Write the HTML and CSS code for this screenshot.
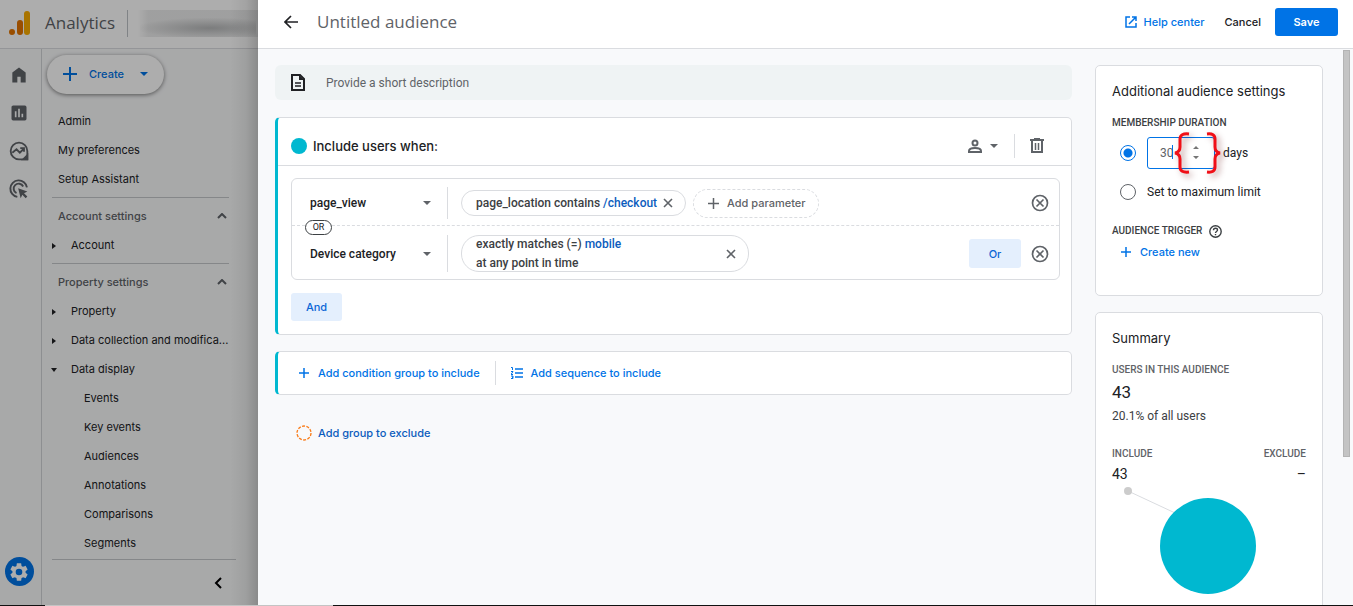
FILE: index.html
```html
<!DOCTYPE html>
<html lang="en">
<head>
  <meta charset="UTF-8" />
  <meta name="viewport" content="width=device-width, initial-scale=1.0" />
  <title>Analytics | Untitled audience</title>
  <link rel="stylesheet" href="styles.css">
</head>
<body>
  <div class="page">
    <div class="backdrop">
      <header class="app-header">
        <svg class="logo" width="22" height="26" viewBox="0 0 22 26">
          <rect x="15" y="1" width="6" height="24" rx="3" fill="#f9ab00"/>
          <rect x="8" y="10" width="6" height="15" rx="3" fill="#e37400"/>
          <circle cx="3" cy="22" r="3" fill="#e37400"/>
        </svg>
        <span class="app-name">Analytics</span>
        <span class="account"></span>
      </header>
      <div class="app-body">
        <nav class="rail">
          <a href="#" aria-label="Home"><svg width="20" height="20" viewBox="0 0 24 24"><path d="M4 21V9l8-6 8 6v12h-6v-7h-4v7z"/></svg></a>
          <a href="#" aria-label="Reports"><svg width="20" height="20" viewBox="0 0 24 24"><path fill-rule="evenodd" d="M5 3h14a2 2 0 0 1 2 2v14a2 2 0 0 1-2 2H5a2 2 0 0 1-2-2V5c0-1.100.9-2 2-2zm2 7v7h2v-7zm4-3v10h2V7zm4 6v4h2v-4z"/></svg></a>
          <a href="#" aria-label="Explore"><svg width="20" height="20" viewBox="0 0 24 24" fill="none" stroke="#5f6368" stroke-width="2.200"><path d="M22 22h-10a10 10 0 1 1 10-10z"/><path d="M4 14l5-4 4 4 5-5M13.500 8.500H18V13"/><path d="M17 22l5-5v5z" fill="#5f6368"/></svg></a>
          <a href="#" aria-label="Advertising"><svg width="20" height="20" viewBox="0 0 24 24" fill="none" stroke="#5f6368" stroke-width="2.300"><path d="M10 21.500A10 10 0 1 1 21.500 10"/><path d="M9 17a6 6 0 1 1 8-8"/><path d="M11 11l11 4-4 2 4 4-2 2-4-4-2 4z" fill="#5f6368" stroke="none"/></svg></a>
          <a href="#" class="rail-admin" aria-label="Admin"><svg width="22" height="22" viewBox="0 0 24 24"><path fill="#fff" d="M19.140 12.940c.040-.300.060-.610.060-.940 0-.320-.020-.640-.070-.940l2.030-1.580c.180-.140.230-.410.120-.610l-1.920-3.320c-.120-.220-.370-.290-.590-.220l-2.390.960c-.500-.380-1.030-.700-1.620-.940l-.360-2.540c-.040-.240-.240-.410-.480-.410h-3.840c-.240 0-.430.170-.470.410l-.360 2.540c-.590.240-1.130.570-1.620.940l-2.390-.960c-.220-.080-.470 0-.590.220L2.740 8.870c-.120.210-.080.470.120.610l2.030 1.580c-.050.300-.090.630-.090.940s.020.640.070.940l-2.030 1.580c-.180.140-.230.410-.120.610l1.920 3.320c.120.220.370.290.590.220l2.390-.960c.500.380 1.030.700 1.620.940l.360 2.540c.050.240.240.410.480.410h3.840c.240 0 .440-.170.470-.410l.360-2.540c.590-.240 1.130-.560 1.620-.940l2.390.960c.220.080.470 0 .590-.220l1.920-3.320c.120-.220.070-.470-.120-.610zM12 15.600A3.600 3.600 0 1 1 12 8.400a3.600 3.600 0 0 1 0 7.200z"/></svg></a>
        </nav>
        <nav class="side">
          <button class="create" type="button">
            <svg width="14" height="14" viewBox="0 0 14 14"><path d="M7 0v14M0 7h14" stroke="#0073e6" stroke-width="2"/></svg>
            <span>Create</span>
            <i class="caret"></i>
          </button>
          <ul class="menu">
            <li><a href="#">Admin</a></li>
            <li><a href="#">My preferences</a></li>
            <li><a href="#">Setup Assistant</a></li>
          </ul>
          <h2 class="menu-title">Account settings <svg width="10" height="6" viewBox="0 0 10 6"><path d="M1 5l4-4 4 4"/></svg></h2>
          <ul class="menu tree">
            <li class="closed"><a href="#">Account</a></li>
          </ul>
          <h2 class="menu-title">Property settings <svg width="10" height="6" viewBox="0 0 10 6"><path d="M1 5l4-4 4 4"/></svg></h2>
          <ul class="menu tree">
            <li class="closed"><a href="#">Property</a></li>
            <li class="closed"><a href="#">Data collection and modifica...</a></li>
            <li class="open"><a href="#">Data display</a></li>
          </ul>
          <ul class="menu sub">
            <li><a href="#">Events</a></li>
            <li><a href="#">Key events</a></li>
            <li><a href="#">Audiences</a></li>
            <li><a href="#">Annotations</a></li>
            <li><a href="#">Comparisons</a></li>
            <li><a href="#">Segments</a></li>
          </ul>
          <div class="side-foot">
            <button type="button" aria-label="Collapse menu"><svg width="8" height="12" viewBox="0 0 8 12"><path d="M7 1L2 6l5 5" fill="none" stroke="#000" stroke-width="2"/></svg></button>
          </div>
        </nav>
      </div>
    </div>

    <section class="panel">
      <header class="panel-header">
        <button class="icon-btn" type="button" aria-label="Back"><svg width="14" height="14" viewBox="0 0 14 14"><path d="M14 7H2M7 1L1 7l6 6" fill="none" stroke="#202124" stroke-width="1.700"/></svg></button>
        <h1>Untitled audience</h1>
        <a class="help" href="#"><svg width="12" height="12" viewBox="0 0 12 12"><path d="M5 1H1v10h10V7M7 1h4v4M11 1L4 8" fill="none" stroke="#0073e6" stroke-width="1.500"/></svg>Help center</a>
        <button class="cancel" type="button">Cancel</button>
        <button class="save" type="button">Save</button>
      </header>

      <div class="panel-body">
        <main class="builder">
          <label class="description">
            <svg width="14" height="17" viewBox="0 0 14 17"><path d="M1 1h8l4 4v11H1z" fill="none" stroke="#202124" stroke-width="2"/><path d="M8 1l5 5H8z" fill="#202124"/><path d="M4 9h6M4 12h6" stroke="#202124" stroke-width="1.500"/></svg>
            <input type="text" placeholder="Provide a short description">
          </label>

          <section class="card group">
            <header class="group-header">
              <i class="dot"></i>
              <h2>Include users when:</h2>
              <button class="icon-btn scope" type="button" aria-label="Condition scope">
                <svg width="14" height="14" viewBox="0 0 14 14" fill="none" stroke="#5f6368" stroke-width="2"><circle cx="7" cy="4" r="2.500"/><path d="M1 13v-1c0-2 3-3 6-3s6 1 6 3v1z"/></svg>
                <i class="caret"></i>
              </button>
              <span class="rule"></span>
              <button class="icon-btn trash" type="button" aria-label="Delete group"><svg width="14" height="16" viewBox="0 0 14 16" fill="none" stroke="#5f6368" stroke-width="2"><path d="M0 2h14M4 1h6M2 2v12h10V2"/><path d="M5.500 5v7M8.500 5v7" stroke-width="1.500"/></svg></button>
            </header>

            <div class="conditions">
              <div class="condition">
                <button class="picker" type="button">page_view <i class="caret"></i></button>
                <div class="chip">
                  <span>page_location contains <b>/checkout</b></span>
                  <button class="icon-btn" type="button" aria-label="Remove parameter"><svg width="10" height="10" viewBox="0 0 10 10"><path d="M1 1l8 8M9 1L1 9" stroke="#5f6368" stroke-width="1.600"/></svg></button>
                </div>
                <button class="add-param" type="button"><svg width="11" height="11" viewBox="0 0 11 11"><path d="M5.500 0v11M0 5.500h11" stroke="#5f6368" stroke-width="1.500"/></svg>Add parameter</button>
                <button class="icon-btn remove" type="button" aria-label="Remove condition"><svg width="18" height="18" viewBox="0 0 18 18"><path d="M5.500 5.500l7 7M12.500 5.500l-7 7" stroke="#5f6368" stroke-width="1.700"/><circle cx="9" cy="9" r="7.500" fill="none" stroke="#5f6368" stroke-width="1.700"/></svg></button>
              </div>
              <span class="or-badge">OR</span>
              <div class="condition second">
                <button class="picker" type="button">Device category <i class="caret"></i></button>
                <div class="chip wide">
                  <span>exactly matches (=) <b>mobile</b><br>at any point in time</span>
                  <button class="icon-btn" type="button" aria-label="Remove filter"><svg width="10" height="10" viewBox="0 0 10 10"><path d="M1 1l8 8M9 1L1 9" stroke="#5f6368" stroke-width="1.600"/></svg></button>
                </div>
                <button class="soft or-btn" type="button">Or</button>
                <button class="icon-btn remove" type="button" aria-label="Remove condition"><svg width="18" height="18" viewBox="0 0 18 18"><path d="M5.500 5.500l7 7M12.500 5.500l-7 7" stroke="#5f6368" stroke-width="1.700"/><circle cx="9" cy="9" r="7.500" fill="none" stroke="#5f6368" stroke-width="1.700"/></svg></button>
              </div>
            </div>
            <button class="soft and-btn" type="button">And</button>
          </section>

          <section class="card add-row">
            <button class="link-btn" type="button"><svg width="12" height="12" viewBox="0 0 12 12"><path d="M6 1v10M1 6h10" stroke="#0073e6" stroke-width="1.500"/></svg>Add condition group to include</button>
            <span class="rule"></span>
            <button class="link-btn" type="button"><svg width="12" height="12" viewBox="0 0 12 12" fill="none" stroke="#0073e6"><path d="M4 2h8M4 6h8M4 10h8" stroke-width="1.400"/><path d="M0 .500h1.500V3M0 4.500h2L0 7.500h2M0 9h2v1.200H1h1v1.300H0"/></svg>Add sequence to include</button>
          </section>

          <button class="link-btn exclude" type="button"><svg width="16" height="16" viewBox="0 0 16 16"><circle cx="8" cy="8" r="7" fill="none" stroke="#fa7b17" stroke-width="1.300" stroke-dasharray="3 1.400"/></svg>Add group to exclude</button>
        </main>

        <aside class="settings">
          <section class="card box duration">
            <h2>Additional audience settings</h2>
            <h3>Membership duration</h3>
            <div class="option">
              <input type="radio" name="duration" id="days" checked>
              <span class="days-field">
                <input type="text" inputmode="numeric" value="30" aria-label="Number of days">
                <i class="cursor"></i>
                <svg class="spin" width="6" height="15" viewBox="0 0 6 15"><path d="M0 4l3-3 3 3zM0 11l3 3 3-3z" fill="#757575"/></svg>
                <svg class="braces" width="50" height="44" viewBox="0 0 50 44" fill="none" stroke="#f00f17" stroke-width="3"><path d="M16 3q-9-1-9 5v8q0 5-5 6 5 1 5 6v8q0 6 9 5"/><path d="M34 3q8-1 8 5v8q0 5 5 6-5 1-5 6v8q0 6-8 5"/></svg>
              </span>
              <label for="days">days</label>
            </div>
            <div class="option max">
              <input type="radio" name="duration" id="max">
              <label for="max">Set to maximum limit</label>
            </div>
            <h3 class="trigger">Audience trigger <svg width="13" height="13" viewBox="0 0 13 13" fill="none" stroke="#3c4043" stroke-width="1.400"><circle cx="6.500" cy="6.500" r="5.700"/><path d="M4.500 5.200c0-2.700 4-2.500 4-.200C8.500 6.500 6.500 6.500 6.500 8M6.500 9v1.300"/></svg></h3>
            <button class="link-btn create-new" type="button"><svg width="12" height="12" viewBox="0 0 12 12"><path d="M6 1v10M1 6h10" stroke="#0073e6" stroke-width="1.500"/></svg>Create new</button>
          </section>

          <section class="card box summary">
            <h2>Summary</h2>
            <h3>Users in this audience</h3>
            <p class="total">43</p>
            <p class="share">20.1% of all users</p>
            <div class="split">
              <div><h3>Include</h3><p>43</p></div>
              <div><h3>Exclude</h3><p>–</p></div>
            </div>
            <svg class="chart" viewBox="0 0 194 120"><path d="M16 8l60 28" stroke="#dadce0"/><circle cx="16" cy="8" r="4" fill="#ccc"/><circle cx="96" cy="63" r="48" fill="#00b8d0"/></svg>
          </section>
        </aside>
        <div class="scrollbar"><i></i></div>
      </div>
    </section>
  </div>
  <div class="edge"></div>
</body>
</html>
```

FILE: styles.css
```css
* {
  box-sizing: border-box;
}
body {
  margin: 0;
  height: 100vh;
  display: flex;
  flex-direction: column;
  overflow: hidden;
  font-family: Roboto, sans-serif;
  font-size: 12px;
  color: #202124;
  background: #fff;
}
h1, h2, h3, p, ul {
  margin: 0;
  padding: 0;
  font-weight: 400;
}
ul {
  list-style: none;
}
a {
  color: inherit;
  text-decoration: none;
}
button {
  padding: 0;
  border: 0;
  background: none;
  font: 500 11px Inter, sans-serif;
  color: inherit;
  cursor: pointer;
}
svg {
  flex: none;
  display: block;
}
.page {
  flex: 1;
  display: flex;
  min-height: 0;
}
.edge {
  height: 1px;
  background: linear-gradient(90deg, #111 45px, #c4c4c4 45px, #c4c4c4 333px, #111 333px);
}
.caret {
  flex: none;
  border: 4px solid transparent;
  border-top-color: #5f6368;
  border-bottom: 0;
}
.icon-btn {
  display: flex;
  align-items: center;
}
.rule {
  width: 1px;
  height: 24px;
  background: #dadce0;
}

/* app behind the panel */
.backdrop {
  position: relative;
  flex: none;
  width: 258px;
  display: flex;
  flex-direction: column;
  overflow: hidden;
  background: #f8f9fa;
  font-family: Inter, sans-serif;
}
.backdrop::after {
  content: "";
  position: absolute;
  inset: 0;
  pointer-events: none;
  background: linear-gradient(270deg, rgba(0,0,0,.18), rgba(0,0,0,.06) 12px, transparent 28px), rgba(0,0,0,.32);
}
.app-header {
  display: flex;
  align-items: center;
  height: 49px;
  padding: 0 0 3px 9px;
  background: #fff;
  border-bottom: 1px solid #dadce0;
}
.app-name {
  margin: 0 12px 0 14px;
  font: 17px "Open Sans", sans-serif;
  color: #5f6368;
}
.account {
  flex: 1;
  align-self: stretch;
  margin: 10px 0 8px;
  border-left: 1px solid #bdc1c6;
  background: radial-gradient(ellipse at 60% 50%, rgba(60,64,67,.3), transparent 75%) 12px 8px / 116px 20px no-repeat,
    linear-gradient(90deg, transparent 10px, rgba(60,64,67,.1) 20px);
}
.app-body {
  flex: 1;
  display: flex;
  min-height: 0;
}
.rail {
  flex: none;
  display: flex;
  flex-direction: column;
  align-items: center;
  gap: 18px;
  width: 42px;
  padding: 16px 3px 19px 0;
  border-right: 1px solid #d0d3d6;
}
.rail svg {
  fill: #5f6368;
}
.rail svg[fill="none"] {
  fill: none;
}
.rail-admin {
  display: grid;
  place-items: center;
  width: 29px;
  height: 29px;
  margin-top: auto;
  border-radius: 50%;
  background: #0073e6;
}
.side {
  flex: 1;
  display: flex;
  flex-direction: column;
  min-width: 0;
  padding: 6px 22px 0 10px;
  font-size: 11px;
  font-weight: 500;
}
.create {
  display: flex;
  align-items: center;
  gap: 12px;
  width: 117px;
  height: 39px;
  margin: 0 0 13px -5px;
  padding: 0 0 1px 16px;
  border-radius: 20px;
  background: #fff;
  box-shadow: 0 1px 4px rgba(0,0,0,.5);
  color: #0073e6;
}
.create .caret {
  margin-left: 4px;
  border-top-color: #0073e6;
}
.menu a {
  display: block;
  padding-left: 6px;
  line-height: 29px;
  white-space: nowrap;
}
.menu-title {
  display: flex;
  align-items: center;
  justify-content: space-between;
  height: 34px;
  margin: 3px 7px 0 0;
  padding: 3px 2px 0 6px;
  border-top: 1px solid #c4c7ca;
  font-size: 11px;
  font-weight: 500;
  color: #5f6368;
}
.menu-title svg {
  fill: none;
  stroke: #5f6368;
  stroke-width: 2;
}
.tree li {
  display: flex;
  align-items: center;
}
.tree li::before {
  content: "";
  flex: none;
  border: 3px solid transparent;
  border-left: 4px solid #202124;
  border-right: 0;
  margin: 0 9px 0 0;
}
.tree li.open::before {
  border: 3px solid transparent;
  border-top: 4px solid #202124;
  border-bottom: 0;
  margin: 0 8px 0 -1px;
}
.sub a {
  padding-left: 32px;
}
.side-foot {
  flex: 1;
  display: flex;
  justify-content: flex-end;
  align-items: center;
  margin-top: 1px;
  padding-right: 14px;
  border-top: 1px solid #c4c7ca;
}

/* audience panel */
.panel {
  flex: 1;
  display: flex;
  flex-direction: column;
  min-width: 0;
  background: #f8f9fb;
}
.panel-header {
  flex: none;
  display: flex;
  align-items: center;
  height: 49px;
  padding: 0 15px 4px 26px;
  background: #fff;
  border-bottom: 1px solid #dadce0;
}
.panel-header h1 {
  flex: 1;
  margin-left: 19px;
  padding-bottom: 2px;
  font: 17px "Open Sans", sans-serif;
  color: #5f6368;
}
.help {
  display: flex;
  align-items: center;
  gap: 7px;
  font: 500 11px Inter, sans-serif;
  color: #0073e6;
}
.cancel {
  margin: 0 14px 0 20px;
}
.save {
  width: 63px;
  height: 28px;
  border-radius: 3px;
  background: #0073e6;
  color: #fff;
  font-weight: 600;
}
.panel-body {
  flex: 1;
  display: flex;
  min-height: 0;
}
.builder {
  flex: 1;
  min-width: 0;
  padding: 16px 23px 0 17px;
}
.card {
  border: 1px solid #dadce0;
  border-radius: 5px;
  background: #fff;
}
.description {
  display: flex;
  align-items: center;
  gap: 21px;
  height: 35px;
  margin-bottom: 17px;
  padding: 0 16px;
  border-radius: 6px;
  background: #eff3f4;
}
.description input {
  flex: 1;
  padding: 0;
  border: 0;
  outline: 0;
  background: none;
  font: 12px Roboto, sans-serif;
}
.description input::placeholder {
  color: #5f6368;
}
.group, .add-row {
  border-left: 3px solid #00b8d0;
}
.group {
  margin-bottom: 16px;
  padding-bottom: 13px;
}
.group-header {
  display: flex;
  align-items: center;
  height: 48px;
  padding: 9px 27px 0 13px;
  border-bottom: 1px solid #dadce0;
}
.group-header h2 {
  flex: 1;
  margin-left: 6px;
  font: 500 13px Inter, sans-serif;
}
.dot {
  width: 16px;
  height: 16px;
  border-radius: 50%;
  background: #00b8d0;
}
.scope {
  gap: 8px;
  margin-right: 16px;
}
.trash {
  margin-left: 15px;
}
.conditions {
  position: relative;
  margin: 12px 11px 13px 13px;
  border: 1px solid #dadce0;
  border-radius: 6px;
}
.condition {
  display: flex;
  align-items: center;
  height: 46px;
  padding: 2px 10px 0 0;
}
.condition.second {
  height: 54px;
  border-top: 1px dashed #dadce0;
}
.or-badge {
  position: absolute;
  top: 41px;
  left: 13px;
  width: 27px;
  border: 1px solid #3c4043;
  border-radius: 8px;
  background: #fff;
  font-size: 9px;
  line-height: 13px;
  text-align: center;
}
.picker {
  display: flex;
  align-items: center;
  justify-content: space-between;
  width: 156px;
  height: 32px;
  padding: 0 16px 0 18px;
  border-right: 1px solid #dadce0;
  font: 500 12px Roboto, sans-serif;
}
.second .picker {
  height: 37px;
}
.chip {
  display: flex;
  align-items: center;
  gap: 6px;
  height: 26px;
  margin: 0 7px 0 13px;
  padding: 0 12px 0 14px;
  border: 1px solid #dadce0;
  border-radius: 18px;
  font-weight: 500;
  line-height: 19px;
  color: #3c4043;
}
.chip b {
  font-weight: 500;
  color: #0b5cbd;
}
.chip.wide {
  justify-content: space-between;
  width: 288px;
  height: 37px;
}
.add-param {
  display: flex;
  align-items: center;
  gap: 8px;
  height: 29px;
  padding: 0 12px 0 14px;
  border: 1px dashed #dadce0;
  border-radius: 15px;
  color: #5f6368;
}
.remove {
  margin-left: auto;
}
.soft {
  border-radius: 3px;
  background: #e4effd;
  color: #0b66d6;
}
.or-btn {
  width: 52px;
  height: 29px;
  margin-left: auto;
}
.or-btn + .remove {
  margin-left: 10px;
}
.and-btn {
  display: block;
  width: 51px;
  height: 28px;
  margin-left: 13px;
}
.add-row {
  display: flex;
  align-items: center;
  gap: 15px;
  height: 44px;
  padding-left: 20px;
}
.link-btn {
  display: flex;
  align-items: center;
  gap: 8px;
  color: #0073e6;
}
.exclude {
  gap: 6px;
  margin: 30px 0 0 21px;
  color: #0b5cbd;
}

/* right column */
.settings {
  flex: none;
  width: 228px;
  margin-right: 20px;
  padding-top: 16px;
  overflow: hidden;
}
.box {
  padding: 16px 16px 0;
}
.box h2 {
  margin-bottom: 16px;
  font: 13px/18px Inter, sans-serif;
}
.box h3 {
  font-size: 10px;
  font-weight: 500;
  line-height: 14px;
  text-transform: uppercase;
  color: #5f6368;
}
.duration {
  height: 231px;
  margin-bottom: 16px;
}
.duration h3 {
  color: #3c4043;
}
.option {
  display: flex;
  align-items: center;
  gap: 11px;
  margin: 7px 0 0 8px;
}
.option input[type="radio"] {
  appearance: none;
  width: 16px;
  height: 16px;
  margin: 0;
  border: 1px solid #5f6368;
  border-radius: 50%;
}
.option input[type="radio"]:checked {
  border: 1px solid #0073e6;
  background: radial-gradient(circle, #0073e6 4px, #fff 5px);
}
.option.max {
  margin-top: 15px;
}
.days-field {
  position: relative;
  display: flex;
  width: 68px;
  margin-right: -3px;
}
.days-field input {
  width: 100%;
  height: 32px;
  padding: 0 30px 0 12px;
  border: 1px solid #0073e6;
  border-radius: 3px;
  outline: 0;
  font: 12px Roboto, sans-serif;
  color: #5f6368;
}
.cursor {
  position: absolute;
  top: 8px;
  left: 25px;
  width: 1px;
  height: 14px;
  background: #0073e6;
}
.spin {
  position: absolute;
  top: 8px;
  right: 16px;
}
/* red braces marking the stepper */
.braces {
  position: absolute;
  top: -6px;
  left: 26px;
  filter: drop-shadow(3px 3px 3px rgba(90,0,0,.4));
}
.box .trigger {
  display: flex;
  align-items: center;
  gap: 7px;
  margin-top: 24px;
}
.create-new {
  margin: 7px 0 0 8px;
}
.summary {
  height: 400px;
}
.total {
  margin-top: 4px;
  font-size: 17px;
  line-height: 22px;
}
.share {
  margin-top: 4px;
  line-height: 18px;
  color: #3c4043;
}
.split {
  display: flex;
  justify-content: space-between;
  margin-top: 22px;
}
.split p {
  margin-top: 4px;
  font-size: 14px;
  line-height: 18px;
}
.split div:last-child {
  text-align: right;
}
.chart {
  width: 100%;
}
.scrollbar {
  width: 10px;
  padding: 1px 3px 0 0;
}
.scrollbar i {
  display: block;
  height: 407px;
  border: 1px solid #b4b4b4;
  background: #c4c4c4;
}
```
